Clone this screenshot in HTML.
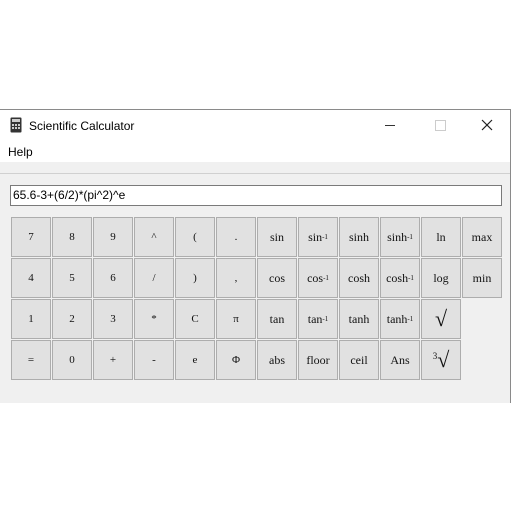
<!DOCTYPE html>
<html><head><style>
body{margin:0;width:512px;height:512px;background:#fff;position:relative;overflow:hidden;font-family:"Liberation Sans",sans-serif}
.win{position:absolute;left:0;top:109px;width:510px;height:293px;border-top:1px solid #8a8a8a;border-right:1px solid #8a8a8a;background:#fff}
.title{position:absolute;left:29px;top:9px;font-size:12px;color:#000}
.menu{position:absolute;left:8px;top:35px;font-size:12px}
.band{position:absolute;left:0;top:52px;width:510px;height:11px;background:#f0f0f0;border-bottom:1px solid #d0d0d0}
.content{position:absolute;left:0;top:64px;width:510px;height:229px;background:#f0f0f0}
.inp{position:absolute;left:10px;top:75px;width:488px;height:19px;border:1px solid #7a7a7a;background:#fff;font-size:12px;line-height:19px;padding-left:2px}
.b{position:absolute;width:38px;height:38px;border:1px solid #adadad;background:#e1e1e1;font-family:"Liberation Serif",serif;font-size:11px;display:flex;align-items:center;justify-content:center;color:#111}
sup{font-size:7px;vertical-align:4px}
</style></head><body>
<div class="win">
<svg style="position:absolute;left:10px;top:7px" width="12" height="16"><rect x="0.5" y="0.5" width="11" height="15" rx="1" fill="#333"/><rect x="2" y="2" width="8" height="3" fill="#ccc"/><g fill="#ccc"><rect x="2" y="7" width="2" height="2"/><rect x="5" y="7" width="2" height="2"/><rect x="8" y="7" width="2" height="2"/><rect x="2" y="10" width="2" height="2"/><rect x="5" y="10" width="2" height="2"/><rect x="8" y="10" width="2" height="2"/></g></svg>
<div class="title">Scientific Calculator</div>
<div style="position:absolute;left:385px;top:15px;width:10px;height:1px;background:#333"></div>
<div style="position:absolute;left:435px;top:10px;width:9px;height:9px;border:1px solid #ccc"></div>
<svg style="position:absolute;left:481px;top:9px" width="12" height="12"><path d="M1 1L11 11M11 1L1 11" stroke="#222" stroke-width="1.2"/></svg>
<div class="menu">Help</div>
<div class="band"></div>
<div class="content"></div>
<div class="inp">65.6-3+(6/2)*(pi^2)^e</div>
</div>
<div id="g"></div>
<script>
var rows=[["7","8","9","^","(",".","sin","sin<sup>-1</sup>","sinh","sinh<sup>-1</sup>","ln","max"],
["4","5","6","/",")",",","cos","cos<sup>-1</sup>","cosh","cosh<sup>-1</sup>","log","min"],
["1","2","3","*","C","π","tan","tan<sup>-1</sup>","tanh","tanh<sup>-1</sup>","<span style='font-size:22px'>√</span>",null],
["=","0","+","-","e","Φ","abs","floor","ceil","Ans","<span style='font-size:22px'><sup style='font-size:9px;vertical-align:8px'>3</sup>√</span>",null]];
var h="";rows.forEach(function(r,i){r.forEach(function(t,j){if(t===null)return;h+='<div class="b" style="left:'+(11+41*j)+'px;top:'+(217+41*i)+'px;font-size:'+(j>=6?12:11)+'px">'+t+'</div>';});});
document.getElementById("g").innerHTML=h;
</script>
</body></html>
